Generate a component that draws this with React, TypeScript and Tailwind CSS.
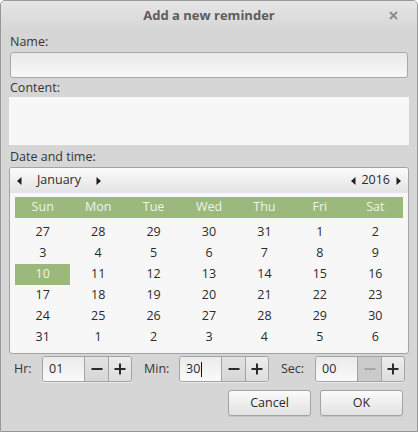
import React from "react";

const font = { fontFamily: '"Open Sans", "Noto Sans", sans-serif' };

const days = ["Sun", "Mon", "Tue", "Wed", "Thu", "Fri", "Sat"];
const weeks = [
  [27, 28, 29, 30, 31, 1, 2],
  [3, 4, 5, 6, 7, 8, 9],
  [10, 11, 12, 13, 14, 15, 16],
  [17, 18, 19, 20, 21, 22, 23],
  [24, 25, 26, 27, 28, 29, 30],
  [31, 1, 2, 3, 4, 5, 6],
];

function Arrow({ dir }: { dir: "left" | "right" }) {
  return (
    <svg width="5" height="8" viewBox="0 0 5 8" className="shrink-0">
      {dir === "left" ? (
        <path d="M4.5 0 L0 4 L4.5 8 Z" fill="#1e1e1e" />
      ) : (
        <path d="M0.5 0 L5 4 L0.5 8 Z" fill="#1e1e1e" />
      )}
    </svg>
  );
}

function Minus({ disabled }: { disabled?: boolean }) {
  return (
    <svg width="12" height="12" viewBox="0 0 12 12">
      <path d="M0.5 6 H11.5" stroke={disabled ? "#a6a6a6" : "#2b2b2b"} strokeWidth="2" />
    </svg>
  );
}

function Plus() {
  return (
    <svg width="12" height="12" viewBox="0 0 12 12">
      <path d="M0.5 6 H11.5 M6 0.5 V11.5" stroke="#2b2b2b" strokeWidth="2" />
    </svg>
  );
}

function Spin({ value, cursor, minusDisabled }: { value: string; cursor?: boolean; minusDisabled?: boolean }) {
  return (
    <div className="flex h-[26px] w-[90px] overflow-hidden rounded-[3px] border border-[#a3a3a3] shadow-[0_1px_0_rgba(255,255,255,0.5)]">
      <div className="flex w-[41px] items-center bg-gradient-to-b from-[#ebebeb] to-[#fafafa] pl-[6px] text-[12.5px] text-[#2a2a2a]">
        {value}
        {cursor && <span className="ml-[1px] h-[15px] w-px bg-[#111]" />}
      </div>
      <div
        className={
          minusDisabled
            ? "flex w-[24px] items-center justify-center border-l border-[#a3a3a3] bg-[#cbcbcb]"
            : "flex w-[24px] items-center justify-center border-l border-[#a3a3a3] bg-gradient-to-b from-[#e2e2e2] to-[#d6d6d6]"
        }
      >
        <Minus disabled={minusDisabled} />
      </div>
      <div className="flex flex-1 items-center justify-center border-l border-[#a3a3a3] bg-gradient-to-b from-[#ededed] to-[#dedede]">
        <Plus />
      </div>
    </div>
  );
}

export default function App() {
  return (
    <div
      style={font}
      className="flex h-[432px] w-[418px] flex-col overflow-hidden rounded-t-[5px] border border-[#979797] bg-[#d6d6d6] text-[12.5px] text-[#353535]"
    >
      {/* title bar */}
      <div className="relative flex h-[29px] shrink-0 items-center justify-center bg-gradient-to-b from-[#e6e6e6] to-[#d6d6d6]">
        <span className="text-[13px] font-bold text-[#5c5c5c]">Add a new reminder</span>
        <svg width="9" height="9" viewBox="0 0 9 9" className="absolute right-[19px] top-[10px]">
          <path d="M1 1 L8 8 M8 1 L1 8" stroke="#8c8c8c" strokeWidth="2" />
        </svg>
      </div>

      <div className="flex flex-1 flex-col px-[8px]">
        <div className="mt-[3px] h-[17px] pl-[1px] leading-[17px]">Name:</div>
        <div className="mx-[1px] mt-[2px] h-[26px] rounded-[3px] border border-[#a8a8a8] bg-gradient-to-b from-[#e9e9e9] to-[#f8f8f8]" />
        <div className="mt-[1px] h-[17px] pl-[1px] leading-[17px]">Content:</div>
        <div className="mt-[1px] h-[48px] bg-[#f7f7f7]" />
        <div className="mt-[3px] h-[17px] pl-[1px] leading-[17px]">Date and time:</div>

        {/* calendar */}
        <div className="mt-[2px] flex h-[187px] flex-col overflow-hidden rounded-[3px] border border-[#a3a3a3] bg-[#f7f7f7]">
          <div className="flex h-[25px] shrink-0 items-center bg-gradient-to-b from-[#fbfbfb] to-[#e3e3e3] text-[#2a2a2a]">
            <div className="ml-[7px]"><Arrow dir="left" /></div>
            <span className="ml-[15px] w-[59px]">January</span>
            <Arrow dir="right" />
            <div className="flex-1" />
            <Arrow dir="left" />
            <span className="ml-[5px] mr-[6px]">2016</span>
            <div className="mr-[7px]"><Arrow dir="right" /></div>
          </div>
          <div className="mx-[5px] mt-[4px] grid h-[21px] shrink-0 grid-cols-7 bg-[#9bb97d]">
            {days.map((d) => (
              <div key={d} className="flex items-center justify-center text-[#eef3e8]">
                {d}
              </div>
            ))}
          </div>
          <div className="mx-[5px] mt-[4px] grid grid-cols-7 text-[#2a2a2a]">
            {weeks.flat().map((n, i) => (
              <div
                key={i}
                className={
                  i === 14
                    ? "flex h-[21px] items-center justify-center bg-[#9bb97d] text-[#eef3e8]"
                    : "flex h-[21px] items-center justify-center"
                }
              >
                {n}
              </div>
            ))}
          </div>
        </div>

        {/* time */}
        <div className="mt-[2px] flex h-[26px] items-center">
          <span className="ml-[5px] w-[28px]">Hr:</span>
          <Spin value="01" />
          <span className="ml-[12px] w-[35px]">Min:</span>
          <Spin value="30" cursor />
          <span className="ml-[12px] w-[34px]">Sec:</span>
          <Spin value="00" minusDisabled />
        </div>

        {/* buttons */}
        <div className="mt-[8px] flex justify-end gap-[9px] pr-[6px]">
          <button className="h-[26px] w-[83px] rounded-[3px] border border-[#a3a3a3] bg-gradient-to-b from-[#fbfbfb] to-[#e2e2e2] text-[#2a2a2a] shadow-[0_1px_0_rgba(0,0,0,0.08)]">
            Cancel
          </button>
          <button className="h-[26px] w-[83px] rounded-[3px] border border-[#a3a3a3] bg-gradient-to-b from-[#fbfbfb] to-[#e2e2e2] text-[#2a2a2a] shadow-[0_1px_0_rgba(0,0,0,0.08)]">
            OK
          </button>
        </div>
      </div>
    </div>
  );
}
